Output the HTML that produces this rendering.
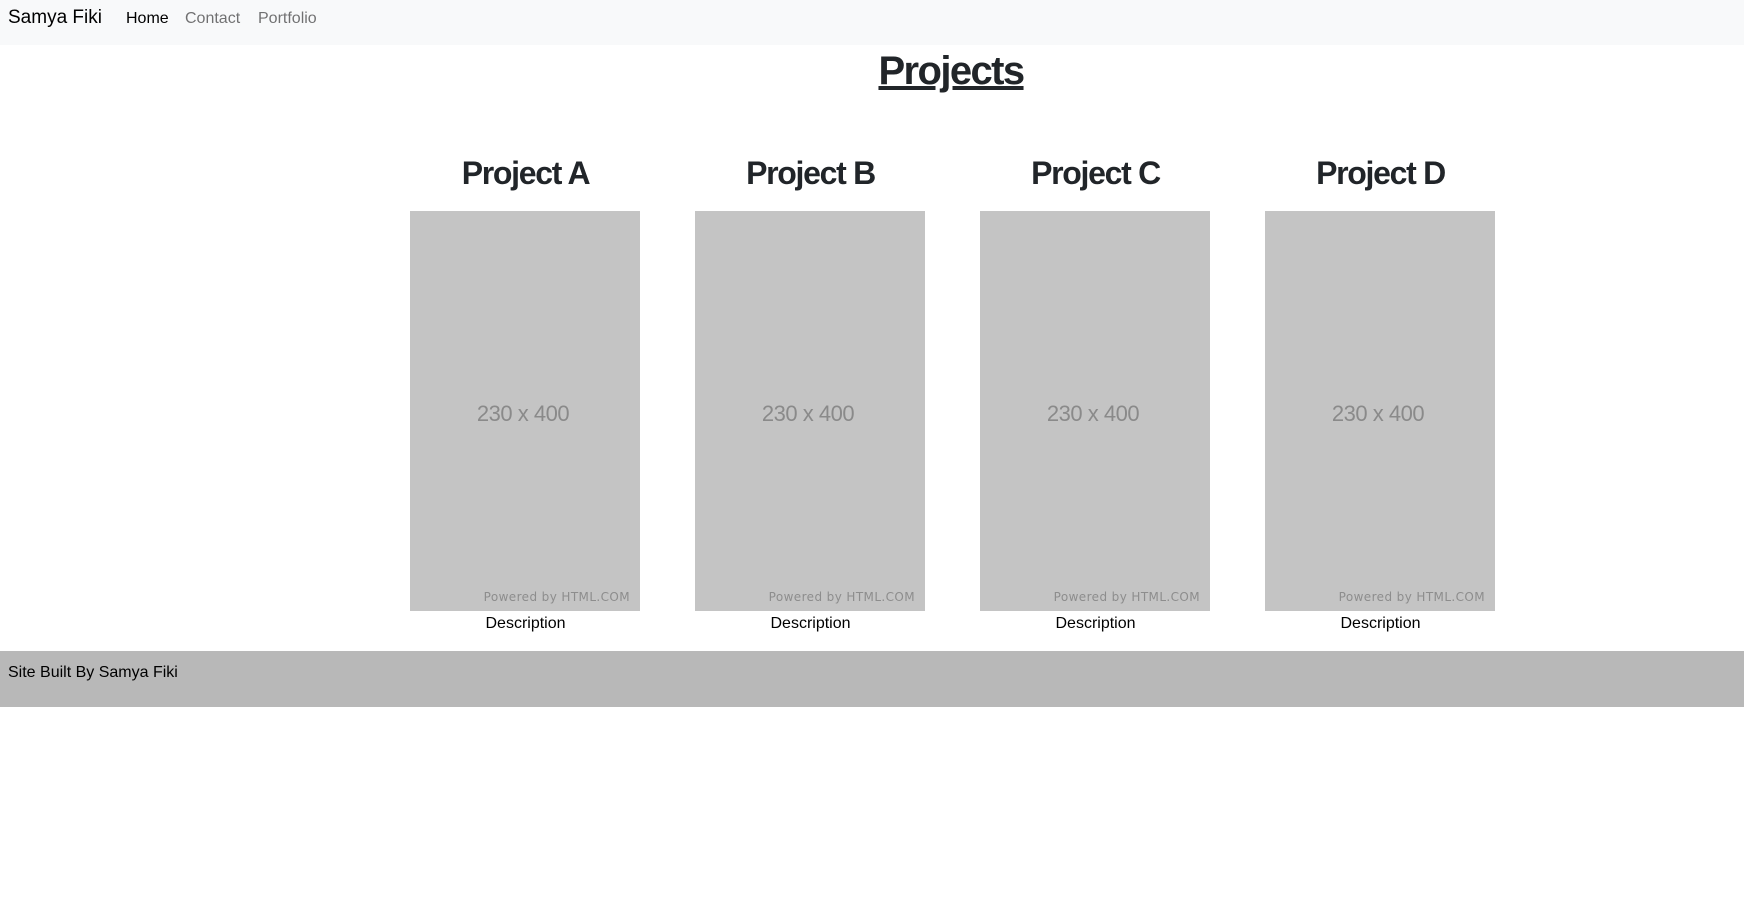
<!DOCTYPE html>
<html><head><meta charset="utf-8"><style>
body{margin:0;font-family:"Liberation Sans",sans-serif;color:#212529;background:#fff;width:1744px;height:905px;position:relative;overflow:hidden}
.nav{position:absolute;left:0;top:0;width:1744px;height:45px;background:#f8f9fa}
.t{position:absolute;white-space:nowrap}
.brand{left:8px;top:7px;font-size:19px;color:#000}
.nl{top:10px;font-size:16px;color:rgba(0,0,0,.55)}
h1{position:absolute;margin:0;left:0;width:1902px;text-align:center;top:47px;font-size:40px;font-weight:bold;text-decoration:underline;line-height:48px;letter-spacing:-1.6px}
.col{position:absolute;top:151px;width:285px;text-align:center}
.col h2{margin:0;font-size:32px;font-weight:bold;line-height:44px;letter-spacing:-1.3px}
.img{position:absolute;top:60px;left:27px;width:230px;height:400px;background:#c4c4c4}
.img .d{position:absolute;left:0;width:226px;top:190px;text-align:center;font-size:22px;color:#8a8a8a;letter-spacing:-0.5px}
.img .p{position:absolute;right:10px;top:379px;font-family:"DejaVu Sans",sans-serif;font-size:12px;color:#8d8d8d;letter-spacing:0.4px}
.desc{position:absolute;top:464px;left:0;width:285px;font-size:16px;color:#000}
.foot{position:absolute;left:0;top:651px;width:1744px;height:56px;background:#b8b8b8}
.foot span{position:absolute;left:8px;top:13px;font-size:16px;color:#000}
</style></head><body>
<div class="nav">
<span class="t brand">Samya Fiki</span>
<span class="t nl" style="left:126px;color:#000">Home</span>
<span class="t nl" style="left:185px">Contact</span>
<span class="t nl" style="left:258px">Portfolio</span>
</div>
<h1>Projects</h1>
<div class="col" style="left:383px"><h2>Project A</h2><div class="img"><div class="d">230 x 400</div><div class="p">Powered by HTML.COM</div></div><div class="desc">Description</div></div>
<div class="col" style="left:668px"><h2>Project B</h2><div class="img"><div class="d">230 x 400</div><div class="p">Powered by HTML.COM</div></div><div class="desc">Description</div></div>
<div class="col" style="left:953px"><h2>Project C</h2><div class="img"><div class="d">230 x 400</div><div class="p">Powered by HTML.COM</div></div><div class="desc">Description</div></div>
<div class="col" style="left:1238px"><h2>Project D</h2><div class="img"><div class="d">230 x 400</div><div class="p">Powered by HTML.COM</div></div><div class="desc">Description</div></div>
<div class="foot"><span>Site Built By Samya Fiki</span></div>
</body></html>
